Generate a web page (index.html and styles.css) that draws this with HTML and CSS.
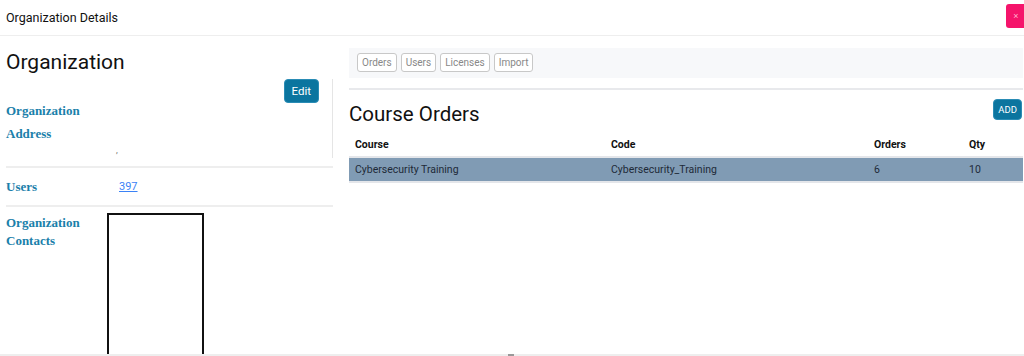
FILE: index.html
```html
<!DOCTYPE html>
<html lang="en">
<head>
    <meta charset="UTF-8">
    <title>Organization Details</title>
    <link rel="stylesheet" href="styles.css">
</head>
<body>

<header class="modal-header">
    <h1>Organization Details</h1>
    <button class="close-btn">&times;</button>
</header>

<section class="modal-body">
    <div class="org-panel">
        <div class="org-top">
            <h2>Organization</h2>
            <div class="org-info">
                <div class="org-fields">
                    <div class="label">Organization</div>
                    <div class="label">Address</div>
                    <div class="address">,</div>
                </div>
                <button class="btn">Edit</button>
            </div>
        </div>
        <div class="row">
            <div class="label">Users</div>
            <a href="#" class="users-link">397</a>
        </div>
        <div class="row contacts">
            <div class="label">Organization<br>Contacts</div>
            <div class="contact-box"></div>
        </div>
    </div>

    <div class="orders-panel">
        <div class="tabs">
            <button class="tab">Orders</button>
            <button class="tab">Users</button>
            <button class="tab">Licenses</button>
            <button class="tab">Import</button>
        </div>
        <div class="divider"></div>
        <div class="orders-head">
            <h2>Course Orders</h2>
            <button class="btn btn-small">ADD</button>
        </div>
        <table>
            <thead>
                <tr>
                    <th class="col-course">Course</th>
                    <th class="col-code">Code</th>
                    <th class="col-orders">Orders</th>
                    <th>Qty</th>
                </tr>
            </thead>
            <tbody>
                <tr class="selected">
                    <td>Cybersecurity Training</td>
                    <td>Cybersecurity_Training</td>
                    <td>6</td>
                    <td>10</td>
                </tr>
            </tbody>
        </table>
    </div>
</section>

<div class="modal-footer"><span class="handle"></span></div>

</body>
</html>
```

FILE: styles.css
```css
body {
    font-family: Roboto, "Liberation Sans", sans-serif;
    margin: 0;
    padding: 0;
    background-color: white;
    color: #111;
    height: 356px;
    overflow: hidden;
    position: relative;
}
.modal-header {
    display: flex;
    justify-content: space-between;
    align-items: flex-start;
    height: 36px;
    border-bottom: 1px solid #eee;
    box-sizing: border-box;
}
.modal-header h1 {
    font-size: 12.5px;
    font-weight: 400;
    margin: 10px 0 0 6px;
}
.close-btn {
    background-color: #f5146b;
    border: none;
    border-radius: 3px 0 0 3px;
    color: #ffb3cf;
    font-size: 9px;
    width: 18px;
    height: 24px;
    margin-top: 4px;
    padding: 0 0 0 2px;
}
.modal-body {
    display: flex;
    padding: 0 1px 0 6px;
}
.org-panel {
    width: 327px;
}
.org-panel h2 {
    font-size: 21px;
    font-weight: 400;
    margin: 13px 0 0 0;
    line-height: 26px;
}
.org-info {
    display: flex;
    justify-content: space-between;
    border-right: 1px solid #e5e5e5;
    margin-top: 4px;
    padding-right: 13px;
    height: 79px;
}
.org-fields {
    padding-top: 23px;
}
.label {
    font-family: "Liberation Serif", serif;
    font-weight: bold;
    font-size: 13px;
    color: #1b80aa;
    line-height: 18px;
    margin-bottom: 5px;
}
.address {
    font-size: 9px;
    color: #777;
    margin: -3px 0 0 110px;
}
.btn {
    background-color: #0b759f;
    color: white;
    border: 1px solid #2a8cb5;
    border-radius: 4px;
    font-family: inherit;
    font-size: 11.5px;
    padding: 0 7px;
    height: 24px;
    cursor: pointer;
}
.btn-small {
    font-size: 9.5px;
    height: 21px;
    padding: 0 4px;
    margin-right: 1px;
}
.org-panel .row {
    display: flex;
    border-top: 2px solid #eee;
    margin-top: 8px;
    padding-top: 10px;
    height: 27px;
}
.org-panel .row .label {
    width: 113px;
}
.users-link {
    color: #3b82f6;
    font-size: 11px;
    line-height: 18px;
}
.org-panel .row.contacts {
    margin-top: 0;
    padding-top: 7px;
    height: auto;
}
.contact-box {
    width: 93px;
    height: 140px;
    border: 2px solid #111;
    margin: -1px 0 0 -12px;
}
.orders-panel {
    flex: 1;
    margin-left: 16px;
}
.tabs {
    background-color: #f7f8fa;
    margin-top: 12px;
    height: 30px;
    display: flex;
    gap: 4px;
    padding: 5px 8px 0;
    box-sizing: border-box;
}
.tab {
    background-color: white;
    border: 1px solid #c8c8c8;
    border-radius: 3px;
    color: #888;
    font-family: inherit;
    font-size: 10px;
    height: 19px;
    padding: 0 4px;
}
.divider {
    border-top: 2px solid #e8e9ec;
    margin-top: 10px;
}
.orders-head {
    display: flex;
    justify-content: space-between;
    align-items: flex-start;
    margin-top: 9px;
}
.orders-head h2 {
    font-size: 20.5px;
    font-weight: 400;
    margin: 2px 0 0 0;
    line-height: 26px;
}
table {
    width: 100%;
    border-collapse: collapse;
    margin-top: 5px;
    font-size: 10.5px;
}
th, td {
    text-align: left;
    padding: 0 6px;
}
th {
    font-weight: bold;
    height: 24px;
    border-bottom: 2px solid #e4e6ea;
}
td {
    height: 23px;
    color: #1e2a38;
}
.col-course { width: 244px; }
.col-code { width: 251px; }
.col-orders { width: 83px; }
tr.selected td {
    background-color: #809bb4;
    border-bottom: 2px solid #e4e6ea;
}
.modal-footer {
    position: absolute;
    left: 0;
    right: 0;
    bottom: 0;
    height: 2px;
    background-color: #eee;
}
.handle {
    position: absolute;
    left: 508px;
    top: 0;
    width: 6px;
    height: 2px;
    background-color: #999;
}
```
